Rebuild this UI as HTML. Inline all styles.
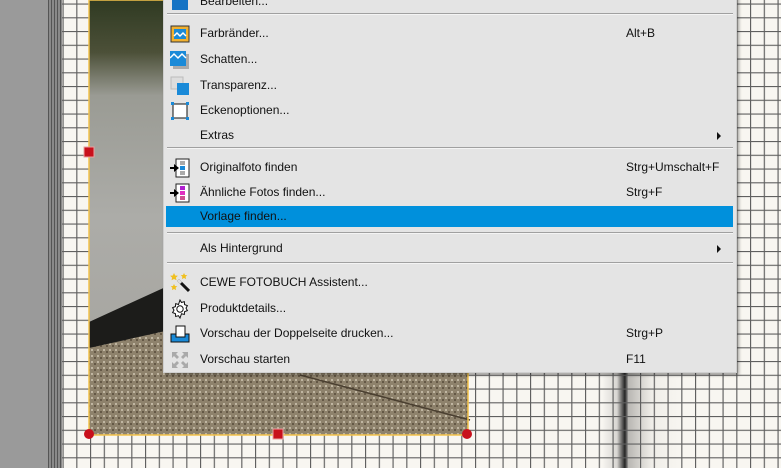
<!DOCTYPE html>
<html><head><meta charset="utf-8"><style>
*{margin:0;padding:0;box-sizing:border-box}
body{width:781px;height:468px;overflow:hidden;position:relative;background:#f8f6f1;font-family:"Liberation Sans",sans-serif}
.menu{position:absolute;left:163px;top:-5px;width:574px;height:378px;background:#e4e4e4;box-shadow:2px 2px 3px rgba(0,0,0,.35);border:1px solid #cfcfcf}
.it{position:absolute;left:0;width:572px;height:22px;font-size:12px;color:#111;line-height:22px}
.it .t{position:absolute;left:36px}
.it .s{position:absolute;left:462px}
.it .a{position:absolute;left:553px;top:8px;width:0;height:0;border-left:4px solid #111;border-top:4px solid transparent;border-bottom:4px solid transparent}
.sep{position:absolute;left:3px;width:566px;background:#a0a0a0;border-bottom:1px solid #f4f4f4;height:2px}
.ic{position:absolute;left:6px;top:2px;width:20px;height:20px}
.hl{background:#0090dc}
</style></head><body>
<div style="position:absolute;left:0;top:0;width:48px;height:468px;background:#9a9a9a"></div>
<div style="position:absolute;left:48px;top:0;width:14px;height:468px;background:repeating-linear-gradient(to right,#555 0 1px,#8a8a8a 1px 3px);"></div>
<div style="position:absolute;left:62px;top:0;width:719px;height:468px;background:linear-gradient(to right,#f8f6f1 0,#f8f6f1 540px,#d8d6d2 555px,#222 563px,#b8b6b2 566px,#f0eee9 590px,#f8f6f1 620px)"></div>
<svg style="position:absolute;left:0;top:0" width="781" height="468">
<defs>
<pattern id="grid" x="62.5" y="3.5" width="13.75" height="13.75" patternUnits="userSpaceOnUse"><path d="M0.5 0V13.75M0 0.5H13.75" stroke="#5f5f5f" stroke-width="1.3" fill="none"/></pattern>
<linearGradient id="w" x1="0" y1="0" x2="0" y2="1"><stop offset="0" stop-color="#2f3a22"/><stop offset=".12" stop-color="#4c5038"/><stop offset=".22" stop-color="#9a9b94"/><stop offset=".5" stop-color="#acaca8"/><stop offset="1" stop-color="#a4a29c"/></linearGradient>
<pattern id="g" width="6" height="6" patternUnits="userSpaceOnUse"><rect width="6" height="6" fill="#8e826c"/><rect x="1" y="1" width="2" height="2" fill="#c0b6a2"/><rect x="4" y="3" width="2" height="2" fill="#645846"/></pattern>
</defs>
<rect x="62" y="0" width="719" height="468" fill="url(#grid)"/>
<rect x="89" y="0" width="379" height="435" fill="url(#w)"/>
<polygon points="89,322 170,285 468,190 468,300 89,350" fill="#1c1c1a"/>
<polygon points="89,348 170,330 468,280 468,435 89,435" fill="url(#g)"/>
<path d="M300 375 L470 420" stroke="#4a3f30" stroke-width="1.5"/>
<rect x="89" y="0" width="379" height="435" fill="none" stroke="#f3c24a" stroke-width="1.5"/>
<rect x="84" y="147" width="10" height="10" fill="#c8101c" stroke="#e8a0a0"/>
<rect x="273" y="429" width="10" height="10" fill="#c8101c" stroke="#e8a0a0"/>
<circle cx="89" cy="434" r="5" fill="#c8101c"/>
<circle cx="467" cy="434" r="5" fill="#c8101c"/>
</svg>
<div class="menu">
<div class="it" style="top:-6px"><svg class="ic" viewBox="0 0 20 20"><rect x="2" y="2" width="16" height="16" fill="#1573c4"/></svg><span class="t">Bearbeiten...</span></div>
<div class="sep" style="top:17px"></div>
<div class="it" style="top:26px"><svg class="ic" viewBox="0 0 20 20"><rect x="1" y="2" width="18" height="16" fill="#f0b030" stroke="#333"/><rect x="4" y="5" width="12" height="10" fill="#1a8ad8"/><path d="M4 12l3-3 3 3 3-3 3 3" stroke="#fff" fill="none" stroke-width="1.5"/></svg><span class="t">Farbränder...</span><span class="s">Alt+B</span></div>
<div class="it" style="top:52px"><svg class="ic" viewBox="0 0 20 20"><rect x="3" y="4" width="16" height="15" fill="#aaa"/><rect x="0" y="1" width="16" height="15" fill="#1a8ad8"/><path d="M0 8l4-4 4 4 4-4 4 4" stroke="#fff" fill="none" stroke-width="1.5"/></svg><span class="t">Schatten...</span></div>
<div class="it" style="top:78px"><svg class="ic" viewBox="0 0 20 20"><rect x="1" y="1" width="12" height="12" fill="#ddd" stroke="#bbb"/><rect x="7" y="7" width="12" height="12" fill="#1a8ad8"/></svg><span class="t">Transparenz...</span></div>
<div class="it" style="top:103px"><svg class="ic" viewBox="0 0 20 20"><rect x="3" y="3" width="14" height="14" fill="#fff" stroke="#111"/><rect x="1" y="1" width="3" height="3" fill="#1a8ad8"/><rect x="16" y="1" width="3" height="3" fill="#1a8ad8"/><rect x="1" y="16" width="3" height="3" fill="#1a8ad8"/><rect x="16" y="16" width="3" height="3" fill="#1a8ad8"/></svg><span class="t">Eckenoptionen...</span></div>
<div class="it" style="top:128px"><span class="t">Extras</span><span class="a"></span></div>
<div class="sep" style="top:151px"></div>
<div class="it" style="top:160px"><svg class="ic" viewBox="0 0 20 20"><rect x="6" y="1" width="13" height="18" fill="#fff" stroke="#222"/><rect x="10" y="3" width="5" height="4" fill="#aaa"/><rect x="10" y="8" width="5" height="4" fill="#1a8ad8"/><rect x="10" y="13" width="5" height="4" fill="#aaa"/><path d="M0 9h4v-3l5 4-5 4v-3H0z" fill="#000"/></svg><span class="t">Originalfoto finden</span><span class="s">Strg+Umschalt+F</span></div>
<div class="it" style="top:185px"><svg class="ic" viewBox="0 0 20 20"><rect x="6" y="1" width="13" height="18" fill="#fff" stroke="#222"/><rect x="10" y="3" width="5" height="4" fill="#b020d0"/><rect x="10" y="8" width="5" height="4" fill="#e030c0"/><rect x="10" y="13" width="5" height="4" fill="#d05090"/><path d="M0 9h4v-3l5 4-5 4v-3H0z" fill="#000"/></svg><span class="t">Ähnliche Fotos finden...</span><span class="s">Strg+F</span></div>
<div class="it hl" style="top:210px;left:2px;width:567px;height:21px"><span class="t" style="left:34px;line-height:21px">Vorlage finden...</span></div>
<div class="sep" style="top:236px"></div>
<div class="it" style="top:241px"><span class="t">Als Hintergrund</span><span class="a"></span></div>
<div class="sep" style="top:266px"></div>
<div class="it" style="top:275px"><svg class="ic" viewBox="0 0 20 20"><path d="M4 0l1.2 2.5 2.7.3-2 1.8.6 2.7L4 6 1.5 7.3l.6-2.7-2-1.8 2.7-.3z" fill="#f0c020"/><path d="M14 0l1 2 2.3.3-1.7 1.5.5 2.3L14 5l-2.1 1.1.5-2.3-1.7-1.5L13 2z" fill="#f0c020"/><path d="M4 11l1 2 2.3.3-1.7 1.5.5 2.3L4 16l-2.1 1.1.5-2.3L.7 13.3 3 13z" fill="#f0c020"/><path d="M8 7l11 11" stroke="#111" stroke-width="3"/><path d="M8 7l3 3" stroke="#ddd" stroke-width="3"/></svg><span class="t">CEWE FOTOBUCH Assistent...</span></div>
<div class="it" style="top:301px"><svg class="ic" viewBox="0 0 20 20"><path d="M10 1l1.5 2.5 2.8-.8.3 2.9 2.8 1-1.4 2.5 1.4 2.5-2.8 1-.3 2.9-2.8-.8L10 19l-1.5-2.3-2.8.8-.3-2.9-2.8-1L4 11.1 2.6 8.6l2.8-1 .3-2.9 2.8.8z" fill="#fff" stroke="#111"/><circle cx="10" cy="10" r="3.2" fill="none" stroke="#111"/></svg><span class="t">Produktdetails...</span></div>
<div class="it" style="top:326px"><svg class="ic" viewBox="0 0 20 20"><rect x="1" y="10" width="18" height="8" fill="#1a8ad8" stroke="#111"/><rect x="6" y="2" width="9" height="11" fill="#fff" stroke="#111"/></svg><span class="t">Vorschau der Doppelseite drucken...</span><span class="s">Strg+P</span></div>
<div class="it" style="top:352px"><svg class="ic" viewBox="0 0 20 20" fill="#aaa"><path d="M2 2h6l-2 2 3 3-2 2-3-3-2 2zM18 2v6l-2-2-3 3-2-2 3-3-2-2zM2 18v-6l2 2 3-3 2 2-3 3 2 2zM18 18h-6l2-2-3-3 2-2 3 3 2-2z"/></svg><span class="t">Vorschau starten</span><span class="s">F11</span></div>
</div>
</body></html>
